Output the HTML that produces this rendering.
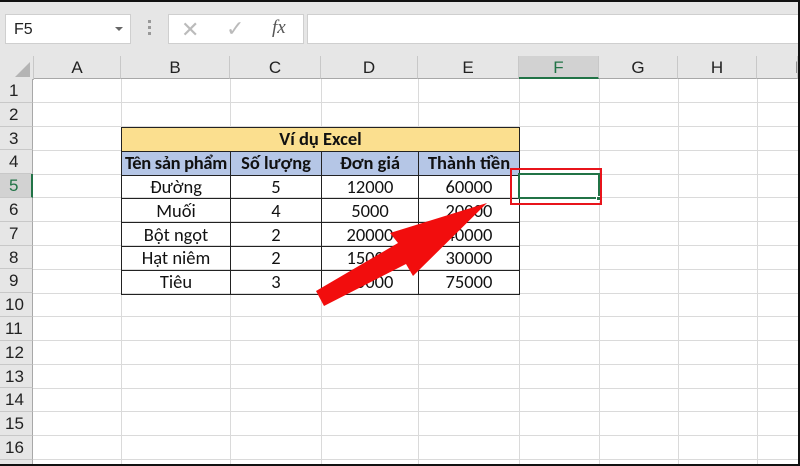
<!DOCTYPE html>
<html><head><meta charset="utf-8"><style>
*{margin:0;padding:0;box-sizing:border-box}
html,body{width:800px;height:466px;overflow:hidden}
body{background:#fff;font-family:"Liberation Sans","DejaVu Sans",sans-serif;position:relative}
.a{position:absolute}
.top{left:0;top:0;width:800px;height:56px;background:#e6e6e6}
.ch{top:56px;height:23px;background:#e6e6e6;border-right:1px solid #c8c8c8;border-bottom:1px solid #a8a8a8;font-size:17px;color:#222;text-align:center;line-height:24px}
.rh{left:0;width:33px;background:#e6e6e6;border-bottom:1px solid #c8c8c8;border-right:1px solid #a8a8a8;font-size:17px;color:#222;padding-left:9px;line-height:23px}
.vl{top:79px;width:1px;height:385px;background:#dadada}
.hl{left:33px;width:765px;height:1px;background:#dadada}
table{position:absolute;left:121px;top:127px;border-collapse:collapse;font-family:"Carlito","Calibri","Liberation Sans",sans-serif;font-size:18.5px;color:#111}
td{border:1.5px solid #222;text-align:center;height:23.8px;padding:0;line-height:20px}
</style></head><body>
<div class="a top"></div>
<div class="a" style="left:0;top:0;width:800px;height:2px;background:#111"></div>
<div class="a" style="left:5px;top:14px;width:126px;height:30px;background:#fff;border:1px solid #cfcfcf;font-size:16px;padding:6px 0 0 8px;color:#222">F5</div>
<div class="a" style="left:115px;top:27px;width:0;height:0;border-left:4px solid transparent;border-right:4px solid transparent;border-top:4px solid #666"></div>
<div class="a" style="left:148px;top:20px;width:3px;height:18px;background:repeating-linear-gradient(#999 0 3px,transparent 3px 6px)"></div>
<div class="a" style="left:168px;top:14px;width:136px;height:30px;background:#fff;border:1px solid #cfcfcf"></div>
<div class="a" style="left:181px;top:17px;font-size:22px;color:#bbb">✕</div>
<div class="a" style="left:226px;top:16px;font-size:22px;color:#bbb">✓</div>
<div class="a" style="left:272px;top:17px;font-size:19px;color:#555;font-style:italic;font-family:'Liberation Serif',serif">fx</div>
<div class="a" style="left:307px;top:14px;width:493px;height:30px;background:#fff;border:1px solid #cfcfcf"></div>
<div class="a" style="left:0;top:56px;width:34px;height:24px;background:#e6e6e6;border-right:1px solid #c8c8c8;border-bottom:1px solid #a8a8a8"></div>
<div class="a" style="left:15px;top:62px;width:0;height:0;border-left:15px solid transparent;border-bottom:15px solid #b4b4b4"></div>
<div class="a ch" style="left:34px;width:87px">A</div>
<div class="a ch" style="left:121px;width:109px">B</div>
<div class="a ch" style="left:230px;width:91px">C</div>
<div class="a ch" style="left:321px;width:97px">D</div>
<div class="a ch" style="left:418px;width:101px">E</div>
<div class="a ch" style="left:519px;width:80px;background:#d2d2d2;border-bottom:2px solid #217346;color:#217346">F</div>
<div class="a ch" style="left:599px;width:79px">G</div>
<div class="a ch" style="left:678px;width:79px">H</div>
<div class="a ch" style="left:757px;width:41px;text-align:left;padding-left:38px;overflow:hidden">I</div>
<div class="a vl" style="left:121px"></div><div class="a vl" style="left:230px"></div><div class="a vl" style="left:321px"></div><div class="a vl" style="left:418px"></div><div class="a vl" style="left:519px"></div><div class="a vl" style="left:599px"></div><div class="a vl" style="left:678px"></div><div class="a vl" style="left:757px"></div>
<div class="a rh" style="top:79.0px;height:23.8px">1</div><div class="a hl" style="top:102px"></div>
<div class="a rh" style="top:102.8px;height:23.8px">2</div><div class="a hl" style="top:126px"></div>
<div class="a rh" style="top:126.6px;height:23.8px">3</div><div class="a hl" style="top:150px"></div>
<div class="a rh" style="top:150.4px;height:23.8px">4</div><div class="a hl" style="top:174px"></div>
<div class="a rh" style="top:174.2px;height:23.8px;background:#d2d2d2;border-right:2px solid #217346;color:#217346">5</div><div class="a hl" style="top:197px"></div>
<div class="a rh" style="top:198.0px;height:23.8px">6</div><div class="a hl" style="top:221px"></div>
<div class="a rh" style="top:221.8px;height:23.8px">7</div><div class="a hl" style="top:245px"></div>
<div class="a rh" style="top:245.6px;height:23.8px">8</div><div class="a hl" style="top:269px"></div>
<div class="a rh" style="top:269.4px;height:23.8px">9</div><div class="a hl" style="top:293px"></div>
<div class="a rh" style="top:293.2px;height:23.8px;padding-left:5px">10</div><div class="a hl" style="top:316px"></div>
<div class="a rh" style="top:317.0px;height:23.8px;padding-left:5px">11</div><div class="a hl" style="top:340px"></div>
<div class="a rh" style="top:340.8px;height:23.8px;padding-left:5px">12</div><div class="a hl" style="top:364px"></div>
<div class="a rh" style="top:364.6px;height:23.8px;padding-left:5px">13</div><div class="a hl" style="top:388px"></div>
<div class="a rh" style="top:388.4px;height:23.8px;padding-left:5px">14</div><div class="a hl" style="top:411px"></div>
<div class="a rh" style="top:412.2px;height:23.8px;padding-left:5px">15</div><div class="a hl" style="top:435px"></div>
<div class="a rh" style="top:436.0px;height:23.8px;padding-left:5px">16</div><div class="a hl" style="top:459px"></div>
<div class="a rh" style="top:459.8px;height:5px"></div>
<table>
<tr><td colspan="4" style="background:#fbdf8f;font-weight:bold;width:398px">Ví dụ Excel</td></tr>
<tr style="background:#b5c6e6;font-weight:bold"><td style="width:109px;letter-spacing:-0.3px">Tên sản phẩm</td><td style="width:91px">Số lượng</td><td style="width:97px">Đơn giá</td><td style="width:101px">Thành tiền</td></tr>
<tr><td>Đường</td><td>5</td><td>12000</td><td>60000</td></tr>
<tr><td>Muối</td><td>4</td><td>5000</td><td>20000</td></tr>
<tr><td>Bột ngọt</td><td>2</td><td>20000</td><td>40000</td></tr>
<tr><td>Hạt niêm</td><td>2</td><td>15000</td><td>30000</td></tr>
<tr><td>Tiêu</td><td>3</td><td>25000</td><td>75000</td></tr>
</table>
<div class="a" style="left:518px;top:173px;width:82px;height:26px;border:2px solid #217346"></div>
<div class="a" style="left:596px;top:196px;width:5px;height:5px;background:#217346;border:1px solid #fff"></div>
<div class="a" style="left:510px;top:168px;width:92px;height:37px;border:2px solid #e8141b"></div>
<svg class="a" style="left:0;top:0" width="800" height="466">
<polygon points="316,291 398,243 390,233 487,203 413,276 406,264 324,306" fill="#f20d0d"/>
</svg>
<div class="a" style="left:798px;top:0;width:2px;height:466px;background:#111"></div>
<div class="a" style="left:0;top:464px;width:800px;height:2px;background:#111"></div>
</body></html>
